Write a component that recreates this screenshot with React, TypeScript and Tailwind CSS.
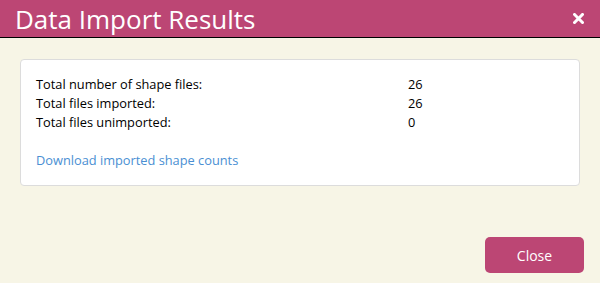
export default function App() {
  const rows = [
    { label: 'Total number of shape files:', value: '26' },
    { label: 'Total files imported:', value: '26' },
    { label: 'Total files unimported:', value: '0' },
  ];

  return (
    <div className="w-[600px] h-[283px] bg-[#f7f5e6] flex flex-col font-['Open_Sans',sans-serif]">
      <div className="h-[38px] bg-[#bc4674] border-b border-black flex items-center justify-between pl-[15px] pr-[16px]">
        <h1 className="text-[26px] leading-none text-white">Data Import Results</h1>
        <svg width="11" height="11" viewBox="0 0 11 11" className="text-white">
          <path d="M1.5 1.5 L9.5 9.5 M9.5 1.5 L1.5 9.5" stroke="currentColor" strokeWidth="3" strokeLinecap="square" />
        </svg>
      </div>

      <div className="px-5 pt-[21px]">
        <div className="bg-white border border-[#dcdcdc] rounded-[4px] h-[127px] pl-[15px] pt-[15px] text-[12.8px] text-black">
          {rows.map((r) => (
            <div key={r.label} className="flex h-[19px] items-center">
              <span className="w-[372px]">{r.label}</span>
              <span>{r.value}</span>
            </div>
          ))}
          <div className="mt-[19px] h-[19px] flex items-center text-[#4a8fd3]">
            Download imported shape counts
          </div>
        </div>
      </div>

      <div className="flex justify-end pr-4 pt-[51px]">
        <button className="w-[99px] h-[36px] rounded-[5px] bg-[#bc4674] text-white text-[14px]">Close</button>
      </div>
    </div>
  );
}
